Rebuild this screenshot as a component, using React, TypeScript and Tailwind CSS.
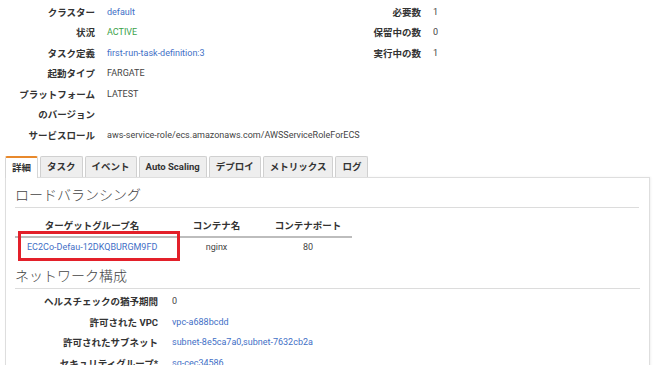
const FONT = "font-['Roboto','Noto_Sans_CJK_JP',sans-serif]";

type Row = { label: string; value?: string; kind?: "link" | "ok" | "text" };

const LEFT: Row[] = [
  { label: "クラスター", value: "default", kind: "link" },
  { label: "状況", value: "ACTIVE", kind: "ok" },
  { label: "タスク定義", value: "first-run-task-definition:3", kind: "link" },
  { label: "起動タイプ", value: "FARGATE" },
  { label: "プラットフォーム", value: "LATEST" },
  { label: "のバージョン" },
  { label: "サービスロール", value: "aws-service-role/ecs.amazonaws.com/AWSServiceRoleForECS" },
];

const RIGHT: Row[] = [
  { label: "必要数", value: "1" },
  { label: "保留中の数", value: "0" },
  { label: "実行中の数", value: "1" },
];

const NETWORK: Row[] = [
  { label: "ヘルスチェックの猶予期間", value: "0" },
  { label: "許可された VPC", value: "vpc-a688bcdd", kind: "link" },
  { label: "許可されたサブネット", value: "subnet-8e5ca7a0,subnet-7632cb2a", kind: "link" },
  { label: "セキュリティグループ*", value: "sg-cec34586", kind: "link" },
];

const TABS = ["詳細", "タスク", "イベント", "Auto Scaling", "デプロイ", "メトリックス", "ログ"];

function valueClass(kind?: Row["kind"]) {
  if (kind === "link") return "text-[#3f6fc6]";
  if (kind === "ok") return "text-[#3ba24a]";
  return "text-[#444]";
}

function Fields({ rows, labelWidth, gap = "pl-3" }: { rows: Row[]; labelWidth: string; gap?: string }) {
  return (
    <div className="flex flex-col">
      {rows.map((r) => (
        <div key={r.label} className="flex h-[20.5px] items-center">
          <div className={`${labelWidth} shrink-0 text-right font-bold text-[#333]`}>{r.label}</div>
          <div className={`${gap} whitespace-nowrap text-[9px] ${valueClass(r.kind)}`}>{r.value}</div>
        </div>
      ))}
    </div>
  );
}

export default function App() {
  return (
    <div className={`${FONT} h-[365px] w-[660px] overflow-hidden bg-white text-[9.5px] leading-none`}>
      <div className="flex pt-[2px]">
        <div className="w-[330px]">
          <Fields rows={LEFT} labelWidth="w-[95px]" />
        </div>
        <Fields rows={RIGHT} labelWidth="w-[91px]" />
      </div>

      <div className="ml-[5px] mt-[10px] w-[645px]">
        <div className="flex items-end gap-[2px]">
          {TABS.map((t, i) => (
            <div
              key={t}
              className={
                i === 0
                  ? "relative -mb-px flex h-[22px] items-center rounded-t-[2px] border border-b-0 border-t-2 border-[#d6d6d6] border-t-[#e8892c] bg-white px-[6px] font-bold text-[#333]"
                  : "flex h-[21px] items-center rounded-t-[2px] border border-b-0 border-[#d0d0d0] bg-[#eeeeee] px-[6px] font-bold text-[#333]"
              }
            >
              {t}
            </div>
          ))}
        </div>
        <div className="h-[200px] border border-[#dedede] px-[9px] pt-[5px] shadow-[1px_0_2px_rgba(0,0,0,0.06)]">
          <h2 className="mr-[1px] flex h-[25px] items-center border-b border-[#dcdcdc] text-[14px] font-light text-[#444]">
            ロードバランシング
          </h2>

          <div className="relative">
            <div className="flex h-[30px] w-[337px] items-end border-b-2 border-[#bdbdbd] pb-[5px] font-bold text-[#333]">
              <div className="w-[154px] text-center">ターゲットグループ名</div>
              <div className="w-[95px] text-center">コンテナ名</div>
              <div className="w-[88px] text-center">コンテナポート</div>
            </div>
            <div className="flex h-[20px] w-[337px] items-center text-[9px] text-[#444]">
              <div className="w-[154px] pl-[12px] text-[#3f6fc6]">EC2Co-Defau-12DKQBURGM9FD</div>
              <div className="w-[95px] text-center">nginx</div>
              <div className="w-[88px] text-center">80</div>
            </div>
            <div className="absolute left-[3px] top-[23px] h-[30px] w-[162px] border-[3px] border-[#e3202a]" />
          </div>

          <h2 className="mt-[7px] flex h-[24px] items-center border-b border-[#dcdcdc] text-[14px] font-light text-[#444]">
            ネットワーク構成
          </h2>
          <div className="pt-[3px]">
            <Fields rows={NETWORK} labelWidth="w-[143px]" gap="pl-[14px]" />
          </div>
        </div>
      </div>
    </div>
  );
}
